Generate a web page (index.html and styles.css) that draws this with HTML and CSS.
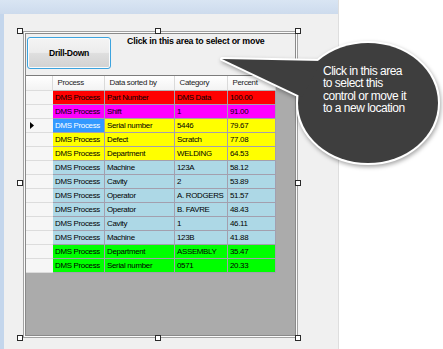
FILE: index.html
```html
<!DOCTYPE html>
<html>
<head>
<meta charset="utf-8">
<link rel="stylesheet" href="styles.css">
</head>
<body>
<div class="window">
  <div class="titlebar"></div>
  <div class="client">
    <div class="ctrl">
      <span class="h h-tl"></span><span class="h h-tm"></span><span class="h h-tr"></span>
      <span class="h h-ml"></span><span class="h h-mr"></span>
      <span class="h h-bl"></span><span class="h h-bm"></span><span class="h h-br"></span>
      <div class="inner">
        <div class="top">
          <button class="btn">Drill-Down</button>
          <div class="lbl">Click in this area to select or move</div>
        </div>
        <div class="grid">
          <div class="dgv">
            <div class="row hdr"><div class="c rh"></div><div class="c">Process</div><div class="c">Data sorted by</div><div class="c">Category</div><div class="c">Percent</div></div>
            <div class="row red"><div class="c rh"></div><div class="c">DMS Process</div><div class="c">Part Number</div><div class="c">DMS Data</div><div class="c">100.00</div></div>
            <div class="row mag"><div class="c rh"></div><div class="c">DMS Process</div><div class="c">Shift</div><div class="c">1</div><div class="c">91.00</div></div>
            <div class="row yel"><div class="c rh"><svg class="arrow" width="4" height="7" viewBox="0 0 4 7"><path d="M0 0 L4 3.5 L0 7 Z" fill="#000"/></svg></div><div class="c sel">DMS Process</div><div class="c">Serial number</div><div class="c">5446</div><div class="c">79.67</div></div>
            <div class="row yel"><div class="c rh"></div><div class="c">DMS Process</div><div class="c">Defect</div><div class="c">Scratch</div><div class="c">77.08</div></div>
            <div class="row yel"><div class="c rh"></div><div class="c">DMS Process</div><div class="c">Department</div><div class="c">WELDING</div><div class="c">64.53</div></div>
            <div class="row blu"><div class="c rh"></div><div class="c">DMS Process</div><div class="c">Machine</div><div class="c">123A</div><div class="c">58.12</div></div>
            <div class="row blu"><div class="c rh"></div><div class="c">DMS Process</div><div class="c">Cavity</div><div class="c">2</div><div class="c">53.89</div></div>
            <div class="row blu"><div class="c rh"></div><div class="c">DMS Process</div><div class="c">Operator</div><div class="c">A. RODGERS</div><div class="c">51.57</div></div>
            <div class="row blu"><div class="c rh"></div><div class="c">DMS Process</div><div class="c">Operator</div><div class="c">B. FAVRE</div><div class="c">48.43</div></div>
            <div class="row blu"><div class="c rh"></div><div class="c">DMS Process</div><div class="c">Cavity</div><div class="c">1</div><div class="c">46.11</div></div>
            <div class="row blu"><div class="c rh"></div><div class="c">DMS Process</div><div class="c">Machine</div><div class="c">123B</div><div class="c">41.88</div></div>
            <div class="row grn"><div class="c rh"></div><div class="c">DMS Process</div><div class="c">Department</div><div class="c">ASSEMBLY</div><div class="c">35.47</div></div>
            <div class="row grn"><div class="c rh"></div><div class="c">DMS Process</div><div class="c">Serial number</div><div class="c">0571</div><div class="c">20.33</div></div>
          </div>
        </div>
      </div>
    </div>
  </div>
</div>
<svg class="callout" width="443" height="349" viewBox="0 0 443 349">
  <g class="bubble-shadow">
    <g fill="#ffffff" stroke="#ffffff" stroke-width="4" stroke-linejoin="round">
      <ellipse cx="368" cy="103" rx="70" ry="60"/>
      <polygon points="222,59 322,61 302,97"/>
    </g>
    <g fill="#3e3e3e">
      <ellipse cx="368" cy="103" rx="70" ry="60"/>
      <polygon points="222,59 322,61 302,97"/>
    </g>
  </g>
</svg>
<div class="callout-text">Click in this area<br>to select this<br>control or move it<br>to a new location</div>
</body>
</html>
```

FILE: styles.css
```css
html, body {
  margin: 0;
  padding: 0;
  background: #ffffff;
  width: 443px;
  height: 349px;
  overflow: hidden;
  position: relative;
  font-family: "Liberation Sans", Arial, sans-serif;
}

.window {
  width: 339px;
  height: 349px;
  display: flex;
  flex-direction: column;
  background: #f0f0f0;
  border-right: 1px solid #dedede;
  box-sizing: border-box;
}

.titlebar {
  height: 14px;
  flex: none;
  background: linear-gradient(#d9e5f3, #cddbed);
}

.client {
  flex: 1;
  border-left: 4px solid #c4d6ec;
  padding: 17px 0 0 19px;
}

.ctrl {
  position: relative;
  width: 275px;
  height: 307px;
  box-sizing: border-box;
  border: 1px solid #a2a2a2;
  padding: 1px;
  background: #fbfbfb;
}

.h {
  position: absolute;
  width: 6px;
  height: 6px;
  box-sizing: border-box;
  border: 1px solid #2a2a2a;
  background: #ffffff;
}
.h-tl { left: -7px; top: -4px; }
.h-tm { left: 131px; top: -4px; }
.h-tr { left: 271px; top: -4px; }
.h-ml { left: -7px; top: 148px; }
.h-mr { left: 271px; top: 148px; }
.h-bl { left: -7px; top: 303px; }
.h-bm { left: 131px; top: 303px; }
.h-br { left: 271px; top: 303px; }

.inner {
  height: 100%;
  box-sizing: border-box;
  border: 1px solid #8a8a8a;
  display: flex;
  flex-direction: column;
  background: #f0f0f0;
}

.top {
  height: 41px;
  flex: none;
  display: flex;
  align-items: flex-start;
}

.btn {
  width: 84px;
  height: 32px;
  margin: 3px 0 0 1px;
  padding: 0;
  border: 1px solid #3ca3de;
  border-radius: 3px;
  background: linear-gradient(#f4f4f4 0%, #ececec 48%, #dedede 52%, #d2d2d2 100%);
  box-shadow: inset 0 0 0 1px #f8fbfd;
  font-family: "Liberation Sans", Arial, sans-serif;
  font-weight: bold;
  font-size: 8.6px;
  letter-spacing: -0.3px;
  color: #000;
}

.lbl {
  margin: 2px 0 0 16px;
  font-weight: bold;
  font-size: 8.8px;
  line-height: 10px;
  letter-spacing: -0.2px;
  color: #000;
  white-space: nowrap;
}

.grid {
  flex: 1;
  border-top: 1px solid #7c7c7c;
  background: #ababab;
}

.dgv {
  display: grid;
  grid-template-columns: 27px 52px 70px 53px 48px;
  grid-template-rows: 15px;
  grid-auto-rows: 14px;
  width: 250px;
}

.row { display: contents; }

.c {
  box-sizing: border-box;
  border-right: 1px solid #a39fae;
  border-bottom: 1px solid #a39fae;
  padding-left: 2px;
  font-size: 7.9px;
  letter-spacing: -0.3px;
  line-height: 13px;
  color: #000;
  white-space: nowrap;
  overflow: hidden;
}

.hdr .c {
  background: linear-gradient(#ffffff, #f3f3f3);
  border-right-color: #dadada;
  border-bottom-color: #b4b4b4;
  padding-left: 4.5px;
  line-height: 14px;
  color: #1a1a1a;
}

.c.rh {
  background: #f6f6f6;
  border-right: none;
  border-bottom-color: #dcdcdc;
  padding-left: 4px;
  display: flex;
  align-items: center;
}

.hdr .c.rh {
  border-right: 1px solid #dadada;
  background: linear-gradient(#ffffff, #f3f3f3);
}

.red .c:not(.rh) { background: #ff0000; }
.mag .c:not(.rh) { background: #ff00ff; }
.yel .c:not(.rh) { background: #ffff00; }
.blu .c:not(.rh) { background: #add8e6; }
.grn .c:not(.rh) { background: #00ff00; }
.yel .c.sel { background: #3399ff; color: #ffffff; }

.arrow { display: block; }

.callout {
  position: absolute;
  left: 0;
  top: 0;
  pointer-events: none;
}

.bubble-shadow {
  filter: drop-shadow(1px 2px 2px rgba(0, 0, 0, 0.35));
}

.callout-text {
  position: absolute;
  left: 323px;
  top: 64.5px;
  color: #ffffff;
  font-size: 12px;
  letter-spacing: -0.5px;
  line-height: 12.5px;
  white-space: nowrap;
}
```
